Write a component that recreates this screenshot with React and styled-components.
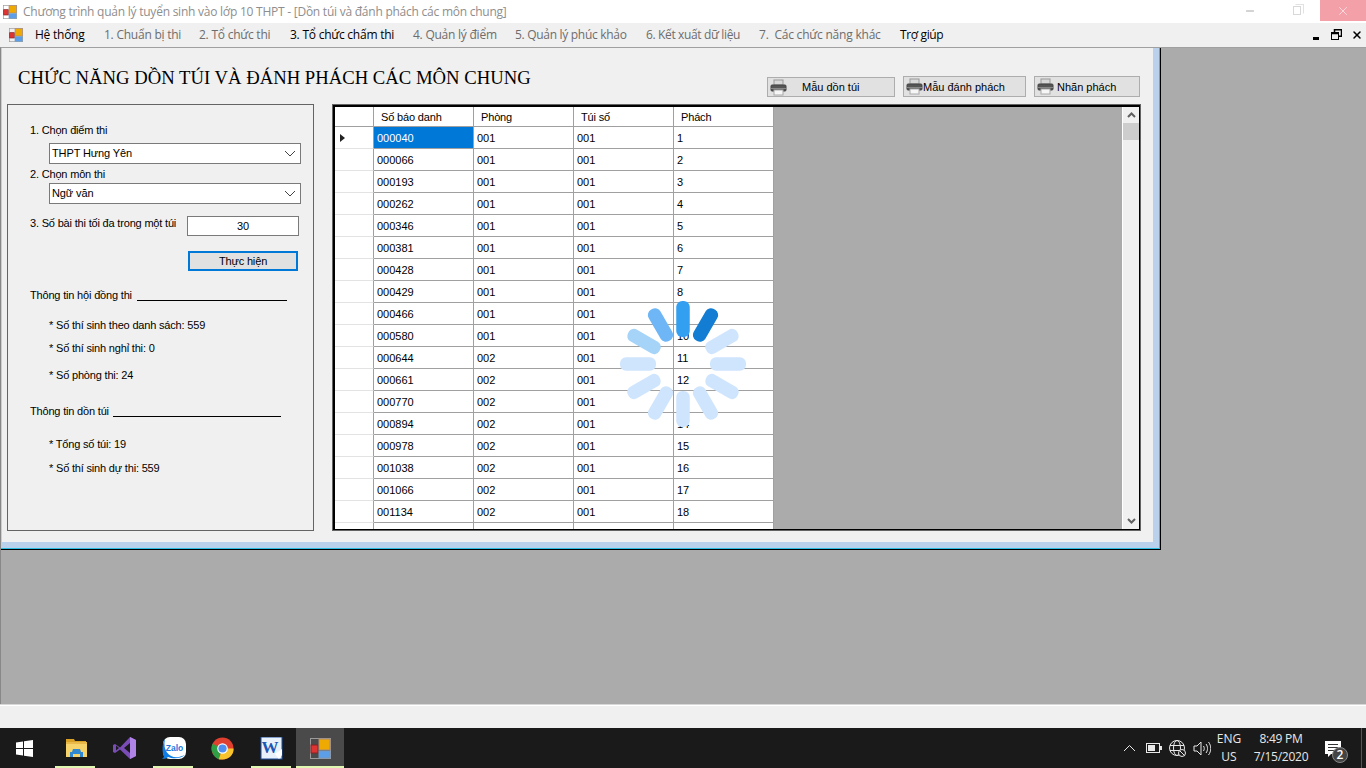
import React from 'react';
import styled, { createGlobalStyle } from 'styled-components';
import { Minus, X } from 'lucide-react';

const Global = createGlobalStyle`
  html, body { margin: 0; padding: 0; width: 1366px; height: 768px; overflow: hidden; background: #ababab; }
  * { box-sizing: border-box; }
  body { font-family: "Liberation Sans", Arial, sans-serif; font-size: 11px; color: #000; }
`;

const Screen = styled.div`display: flex; flex-direction: column; width: 1366px; height: 768px;`;

const TitleBar = styled.div`
  height: 23px; background: #fff; display: flex; align-items: center; flex: none;
`;
const TitleText = styled.span`
  font-family: "Open Sans", sans-serif; font-size: 12px; color: #8e8e8e; margin-left: 6px; white-space: nowrap; letter-spacing: -0.02em;
  flex: 1;
`;
const LogoSlot = styled.span`display: flex; margin-left: ${p => p.$left}px;`;
const WinButton = styled.div`
  width: ${p => p.$close ? 46 : 47}px; height: 21px; align-self: flex-start; display: flex; align-items: center; justify-content: center;
  background: ${p => p.$close ? '#f4a0a8' : 'transparent'}; color: ${p => p.$close ? '#fff' : '#a8a8a8'};
`;
const RestoreGlyph = styled.span`
  width: 8px; height: 9px; border: 1px solid #d8d8d8; position: relative; display: block;
  &::after { content: ''; position: absolute; width: 7px; height: 8px; left: 1px; top: -3px; border: 1px solid #e2e2e2; border-left-color: transparent; border-bottom-color: transparent; }
`;

const MenuBar = styled.div`
  height: 24px; flex: none; display: flex; align-items: center; background: #f0f0f0; padding-bottom: 1px;
`;
const MenuItem = styled.span`
  position: absolute; left: ${p => p.$x}px;
  font-family: "Open Sans", sans-serif; font-size: 12px; white-space: nowrap; letter-spacing: ${p => p.$ls}em;
  color: ${p => p.$on ? '#000' : '#6d6d6d'};
`;
const MenuTrack = styled.div`position: relative; flex: 1; height: 100%; display: flex; align-items: center;`;
const MdiControls = styled.div`display: flex; gap: 9px; align-items: center; margin-right: 3px; color: #000;`;
const MdiMin = styled.span`width: 6px; height: 3px; background: #000; margin: 7px 3px 0 0;`;

const Desktop = styled.div`flex: 1; background: #ababab; min-height: 0; border-left: 1px solid #888; border-top: 1px solid #a0a0a0;`;

const ChildWindow = styled.div`
  width: 1160px; height: 502px; background: #b9d1ea; border-right: 1px solid #000; border-bottom: 1px solid #000;
  box-shadow: inset -1px -1px 0 #2ebde0; padding: 0 7px 7px 1px;
`;
const ChildBody = styled.div`
  background: #f0f0f0; height: 100%; position: relative; padding: 0 0 0 5px; display: flex; flex-direction: column;
`;
const HeadRow = styled.div`display: flex; height: 56px; flex: none; align-items: flex-start;`;
const Heading = styled.h1`
  margin: 19px 0 0 11px; font-family: "Liberation Serif", serif; font-weight: 400; font-size: 18.7px; line-height: 22px; white-space: nowrap; flex: 1;
`;
const Tools = styled.div`display: flex; align-items: flex-end; margin-top: 28px; margin-right: 13px;`;
const ToolButton = styled.div`
  width: ${p => p.$w}px; height: ${p => p.$h}px; margin-left: ${p => p.$gap}px; background: #e1e1e1; border: 1px solid #adadad;
  display: flex; align-items: center; padding-left: 2px; white-space: nowrap;
`;
const ToolLabel = styled.span`margin-left: ${p => p.$m}px;`;

const Columns = styled.div`display: flex; align-items: flex-start;`;
const Panel = styled.div`
  width: 307px; height: 427px; border: 1px solid #646464; padding: 18px 0 0 22px; flex: none;
`;
const Label = styled.div`
  height: 15px; line-height: 15px; margin-left: ${p => p.$l || 0}px; margin-top: ${p => p.$t || 0}px; white-space: nowrap; letter-spacing: -0.18px;
  width: ${p => p.$w ? `${p.$w}px` : 'auto'}; flex: none;
`;
const Combo = styled.div`
  width: 252px; height: 21px; margin: ${p => p.$t}px 0 0 19px; background: #fff; border: 1px solid #7a7a7a; display: flex; align-items: center; justify-content: space-between; padding: 0 4px 1px 2px; letter-spacing: -0.12px;
`;
const Line3 = styled.div`display: flex; margin-top: 12px; align-items: flex-start; height: 20px;`;
const Spin = styled.div`
  width: 112px; height: 20px; background: #fff; border: 1px solid #7a7a7a; text-align: center; line-height: 19px;
`;
const Go = styled.div`
  width: 110px; height: 20px; margin: 15px 0 0 158px; background: #e1e1e1; border: 2px solid #0078d7; text-align: center; line-height: 16px; letter-spacing: -0.15px;
`;
const HeadLine = styled.div`
  display: flex; align-items: flex-end; height: 15px; margin-top: ${p => p.$t}px; white-space: nowrap;
`;
const Rule = styled.span`height: 1px; background: #000; width: ${p => p.$w}px; margin-bottom: 2px;`;

const GridFrame = styled.div`
  width: 809px; height: 427px; margin-left: 18px; border: 1px solid #646464; flex: none;
`;
const GridInner = styled.div`
  height: 100%; border-style: solid; border-color: #000; border-width: 2px 1px 1px 2px; background: #ababab; display: flex; overflow: hidden;
`;
const GridArea = styled.div`flex: 1; min-width: 0; overflow: hidden;`;
const Row = styled.div`display: flex; height: ${p => p.$head ? 20 : 22}px;`;
const Corner = styled.div`
  width: 39px; flex: none; background: #fff; border-right: 1px solid #a0a0a0; border-bottom: 1px solid ${p => p.$line ? '#e3e3e3' : '#a0a0a0'}; display: flex; align-items: center; padding-left: 5px;
`;
const HeadCell = styled.div`
  width: 100px; flex: none; background: #fff; border-right: 1px solid #a0a0a0; border-bottom: 1px solid #a0a0a0; padding-left: 7px; line-height: 21px; letter-spacing: -0.15px;
`;
const Cell = styled.div`
  width: 100px; flex: none; padding-left: 3px; line-height: 23px;
  background: ${p => p.$sel ? '#0078d7' : '#fff'}; color: ${p => p.$sel ? '#fff' : '#000'};
  border-right: 1px solid #a0a0a0; border-bottom: 1px solid #a0a0a0;
`;
const Arrow = styled.span`width: 0; height: 0; border-left: 5px solid #222; border-top: 4.5px solid transparent; border-bottom: 4.5px solid transparent;`;
const Scroll = styled.div`
  width: 17px; flex: none; background: #f0f0f0; border-left: 1px solid #fff; display: flex; flex-direction: column; align-items: center;
`;
const ScrollBtn = styled.div`height: 16px; width: 100%; display: flex; align-items: center; justify-content: center;`;
const Thumb = styled.div`width: 100%; height: 17px; background: #cdcdcd;`;
const ScrollFill = styled.div`flex: 1;`;

const Loader = styled.svg`position: absolute; left: 614px; top: 249px;`;

const Status = styled.div`height: 24px; flex: none; background: #f0f0f0; border-top: 1px solid #d7d7d7; box-shadow: inset 0 1px 0 #fff;`;
const Taskbar = styled.div`height: 40px; flex: none; background: #1a1a1a; display: flex; align-items: stretch; color: #e8e8e8;`;
const StartBtn = styled.div`width: 48px; display: flex; align-items: center; justify-content: center; margin-right: 3px; flex: none;`;
const TaskBtn = styled.div`
  width: ${p => p.$active ? 48 : 49}px; display: flex; align-items: center; justify-content: center; position: relative; flex: none;
  background: ${p => p.$active ? '#4a4a4a' : 'transparent'};
  &::after { content: ''; position: absolute; bottom: 0; height: 2px; background: #dff7b0; left: ${p => p.$active ? 0 : 4}px; right: ${p => p.$active ? 0 : 5}px; display: ${p => p.$open ? 'block' : 'none'}; }
`;
const Spacer = styled.div`flex: 1;`;
const Tray = styled.div`display: flex; align-items: center; font-family: "Open Sans", sans-serif; font-size: 12px; border-right: 1px solid #555; margin-right: 4px;`;
const TrayIcon = styled.span`display: flex; margin-left: ${p => p.$m}px; padding-top: ${p => p.$pt || 0}px;`;
const Lang = styled.div`width: 30px; margin-left: 3px; text-align: center; line-height: 18px;`;
const Clock = styled.div`width: 66px; margin-left: 4px; text-align: center; line-height: 18px; letter-spacing: -0.02em;`;
const Note = styled.div`width: 30px; height: 30px; margin: 0 10px 0 7px; position: relative;`;
const Badge = styled.span`
  position: absolute; right: 3px; bottom: 0; width: 16px; height: 16px; border-radius: 50%; background: #444; border: 1px solid #888; color: #fff; font-size: 12px; font-weight: 600; line-height: 14px; text-align: center;
`;

const Logo = ({ s = 14 }) => (
  <svg width={s} height={s} viewBox="0 0 21 21">
    <rect x="0.5" y="0.5" width="20" height="20" fill="none" stroke="#9a9a9a" />
    <rect x="1" y="7" width="7" height="8" fill="#d33" stroke="#822" />
    <rect x="9" y="1" width="11" height="11" fill="#eeaa00" stroke="#a87" />
    <rect x="9" y="13" width="11" height="7" fill="#5c9ee8" stroke="#79b" />
  </svg>
);

const Printer = () => (
  <svg width="17" height="17" viewBox="0 0 17 17">
    <rect x="4" y="1" width="9" height="5" fill="#d8d8d8" stroke="#999" />
    <rect x="1" y="6" width="15" height="6" rx="1" fill="#555" stroke="#444" />
    <rect x="1" y="9" width="15" height="1" fill="#888" />
    <rect x="4" y="11" width="9" height="5" fill="#f6f6f6" stroke="#aaa" />
  </svg>
);

const Chevron = () => (
  <svg width="12" height="7" viewBox="0 0 12 7"><path d="M1 1l5 5 5-5" fill="none" stroke="#444" strokeWidth="1" /></svg>
);

const ScrollChev = ({ up }) => (
  <svg width="9" height="6" viewBox="0 0 9 6">
    <path d={up ? 'M1 5l3.5-3.5L8 5' : 'M1 1l3.5 3.5L8 1'} fill="none" stroke="#606060" strokeWidth="2" />
  </svg>
);

const WinLogo = () => (
  <svg width="17" height="17" viewBox="0 0 17 17" fill="#fff">
    <path d="M0 2.4l7-1v6.6H0zM8 1.2L17 0v8H8zM0 9h7v6.6l-7-1zM8 9h9v8l-9-1.2z" />
  </svg>
);
const Folder = () => (
  <svg width="24" height="24" viewBox="0 0 24 24">
    <path d="M2 3h8l1 2h11v2H2z" fill="#d9a227" />
    <rect x="2" y="6" width="21" height="15" fill="#f6d36b" />
    <rect x="2" y="6" width="21" height="2" fill="#e9b949" />
    <path d="M6 21v-5h2l1-3h7l1 3h2v5h-3v-3H9v3z" fill="#2f88d0" />
  </svg>
);
const VS = () => (
  <svg width="24" height="24" viewBox="0 0 24 24">
    <path d="M17 1l6 3v16l-6 3-10-9.500-5 3.500-2-1V9l2-1 5 3.500z" fill="#7a4cb5" />
    <path d="M17 1l6 3v16l-6 3z" fill="#b083e6" />
    <path d="M3 9.500v5l3-2.500zM17 7l-6 5 6 5z" fill="#1a1a1a" />
  </svg>
);
const Zalo = () => (
  <svg width="24" height="24" viewBox="0 0 24 24">
    <rect x="1" y="1" width="23" height="22" rx="7" fill="#fff" />
    <path d="M3 3C0 7 0 16 2 21l-2 2c3 0 5-1 6-2 5 2 12 2 17-2l-6 2C9 23 0 16 3 3z" fill="#0d7ee8" />
    <text x="12.500" y="15" fontFamily="'Liberation Sans', sans-serif" fontSize="8.500" fontWeight="700" fill="#1a78e0" textAnchor="middle">Zalo</text>
  </svg>
);
const Chrome = () => (
  <svg width="23" height="23" viewBox="0 0 24 24">
    <circle cx="12" cy="12" r="11.500" fill="#e0402f" />
    <path d="M12 12L1.600 7C-1 13 2 21 8 23z" fill="#2f9e44" />
    <path d="M12 12h11.500C24 18 19 23.500 12 23.500H8z" fill="#f7c52b" />
    <circle cx="12" cy="12" r="5.500" fill="#fff" />
    <circle cx="12" cy="12" r="4.300" fill="#4f8fef" />
  </svg>
);
const Word = () => (
  <svg width="23" height="23" viewBox="0 0 23 23">
    <rect x="1" y="0" width="21" height="22" fill="#e9f1fb" stroke="#1d4e9e" />
    <text x="10" y="16" fontFamily="'Liberation Serif', serif" fontSize="17" fontWeight="700" fill="#1b57b5" textAnchor="middle">W</text>
    <path d="M15 17l7-5v6l-3 4z" fill="#fff" />
  </svg>
);

const Globe = () => (
  <svg width="17" height="17" viewBox="0 0 17 17" fill="none" stroke="#e8e8e8" strokeWidth="1">
    <circle cx="8" cy="8" r="7.500" />
    <ellipse cx="8" cy="8" rx="3.500" ry="7.500" />
    <path d="M1 5.500h14M1 10.500h14" />
    <circle cx="13" cy="13" r="3.500" fill="#1a1a1a" />
    <path d="M10.500 10.500l5 5" />
  </svg>
);
const Speaker = () => (
  <svg width="18" height="15" viewBox="0 0 18 15" fill="none" stroke="#e8e8e8" strokeWidth="1">
    <path d="M1 5h3l4-4v13l-4-4H1z" />
    <path d="M10.500 5c1 1.500 1 3.500 0 5M13 3c2 2.500 2 6.500 0 9M15.500 1c3 4 3 9 0 13" />
  </svg>
);
const Battery = () => (
  <svg width="16" height="10" viewBox="0 0 16 10">
    <rect x="0.500" y="0.500" width="13" height="9" fill="none" stroke="#e8e8e8" />
    <rect x="2" y="2" width="7" height="6" fill="#e8e8e8" />
    <rect x="14" y="3" width="2" height="4" fill="#e8e8e8" />
  </svg>
);
const Caret = () => (
  <svg width="13" height="8" viewBox="0 0 13 8"><path d="M1 7l5.500-5.500L12 7" fill="none" stroke="#e8e8e8" strokeWidth="1" /></svg>
);
const Bubble = () => (
  <svg width="17" height="17" viewBox="0 0 17 17">
    <path d="M0 0h16v13H6l-3 3v-3H0z" fill="#fff" />
    <path d="M3 3.500h10M3 6.500h10M3 9.500h10" stroke="#333" />
  </svg>
);

const Spinner = () => {
  const colors = { 0: '#329ff1', 30: '#127dd2', 330: '#6eb6f6', 300: '#a5d4f8' };
  return (
    <Loader width="134" height="134" viewBox="-67 -67 134 134">
      {[30, 60, 90, 120, 150, 180, 210, 240, 270, 300, 330, 0].map(a => (
        <rect key={a} x="-6.750" y="-63" width="13.500" height="36" rx="6" fill={colors[a] || '#cfe5fd'} transform={`rotate(${a})`} />
      ))}
    </Loader>
  );
};

const data = [
  ['000040','001','1'],['000066','001','2'],['000193','001','3'],['000262','001','4'],['000346','001','5'],['000381','001','6'],
  ['000428','001','7'],['000429','001','8'],['000466','001','9'],['000580','001','10'],['000644','002','11'],['000661','002','12'],
  ['000770','002','13'],['000894','002','14'],['000978','002','15'],['001038','002','16'],['001066','002','17'],['001134','002','18'],['001200','002','19'],
];
const menus = [
  ['Hệ thống', 35, true, -0.02], ['1. Chuẩn bị thi', 104, false, -0.02], ['2. Tổ chức thi', 199, false, -0.02], ['3. Tổ chức chấm thi', 290, true, -0.02], ['4. Quản lý điểm', 413, false, -0.02],
  ['5. Quản lý phúc khảo', 515, false, -0.025], ['6. Kết xuất dữ liệu', 646, false, -0.03], ['7.\u00a0\u00a0Các chức năng khác', 759, false, -0.018], ['Trợ giúp', 900, true, -0.03],
];

export default function App() {
  return (
    <Screen>
      <Global />
      <TitleBar>
        <LogoSlot $left={3}><Logo /></LogoSlot>
        <TitleText>Chương trình quản lý tuyển sinh vào lớp 10 THPT - [Dồn túi và đánh phách các môn chung]</TitleText>
        <WinButton><Minus size={12} /></WinButton>
        <WinButton><RestoreGlyph /></WinButton>
        <WinButton $close><X size={14} strokeWidth={1} /></WinButton>
      </TitleBar>
      <MenuBar>
        <MenuTrack>
          <LogoSlot $left={9}><Logo /></LogoSlot>
          {menus.map(([t, x, on, ls]) => <MenuItem key={t} $x={x} $on={on} $ls={ls}>{t}</MenuItem>)}
        </MenuTrack>
        <MdiControls>
          <MdiMin />
          <svg width="11" height="11" viewBox="0 0 11 11" fill="none" stroke="#000"><rect x="0.500" y="3.500" width="7" height="7" strokeWidth="1" /><path d="M0.500 4.500h7M3.500 3V0.800h7v6.500H8" strokeWidth="1.500" /></svg>
          <X size={12} strokeWidth={3} />
        </MdiControls>
      </MenuBar>
      <Desktop>
        <ChildWindow>
          <ChildBody>
            <HeadRow>
              <Heading>CHỨC NĂNG DỒN TÚI VÀ ĐÁNH PHÁCH CÁC MÔN CHUNG</Heading>
              <Tools>
                <ToolButton $w={128} $h={20} $gap={0}><Printer /><ToolLabel $m={15}>Mẫu dồn túi</ToolLabel></ToolButton>
                <ToolButton $w={123} $h={21} $gap={8}><Printer /><ToolLabel $m={0}>Mẫu đánh phách</ToolLabel></ToolButton>
                <ToolButton $w={106} $h={21} $gap={8}><Printer /><ToolLabel $m={3}>Nhãn phách</ToolLabel></ToolButton>
              </Tools>
            </HeadRow>
            <Columns>
              <Panel>
                <Label>1. Chọn điểm thi</Label>
                <Combo $t={5}>THPT Hưng Yên<Chevron /></Combo>
                <Label $t={3}>2. Chọn môn thi</Label>
                <Combo $t={1}>Ngữ văn<Chevron /></Combo>
                <Line3>
                  <Label $w={157}>3. Số bài thi tối đa trong một túi</Label>
                  <Spin>30</Spin>
                </Line3>
                <Go>Thực hiện</Go>
                <HeadLine $t={17}><Label $w={107}>Thông tin hội đồng thi</Label><Rule $w={150} /></HeadLine>
                <Label $l={19} $t={15}>* Số thí sinh theo danh sách: 559</Label>
                <Label $l={19} $t={8}>* Số thí sinh nghỉ thi: 0</Label>
                <Label $l={19} $t={12}>* Số phòng thi: 24</Label>
                <HeadLine $t={21}><Label $w={83}>Thông tin dồn túi</Label><Rule $w={168} /></HeadLine>
                <Label $l={19} $t={18}>* Tổng số túi: 19</Label>
                <Label $l={19} $t={9}>* Số thí sinh dự thi: 559</Label>
              </Panel>
              <GridFrame>
                <GridInner>
                  <GridArea>
                    <Row $head>
                      <Corner />
                      <HeadCell>Số báo danh</HeadCell><HeadCell>Phòng</HeadCell><HeadCell>Túi số</HeadCell><HeadCell>Phách</HeadCell>
                    </Row>
                    {data.map((r, i) => (
                      <Row key={r[0]}>
                        <Corner $line>{i === 0 && <Arrow />}</Corner>
                        <Cell $sel={i === 0}>{r[0]}</Cell><Cell>{r[1]}</Cell><Cell>001</Cell><Cell>{r[2]}</Cell>
                      </Row>
                    ))}
                  </GridArea>
                  <Scroll>
                    <ScrollBtn><ScrollChev up /></ScrollBtn>
                    <Thumb />
                    <ScrollFill />
                    <ScrollBtn><ScrollChev /></ScrollBtn>
                  </Scroll>
                </GridInner>
              </GridFrame>
            </Columns>
            <Spinner />
          </ChildBody>
        </ChildWindow>
      </Desktop>
      <Status />
      <Taskbar>
        <StartBtn><WinLogo /></StartBtn>
        <TaskBtn $open><Folder /></TaskBtn>
        <TaskBtn><VS /></TaskBtn>
        <TaskBtn $open><Zalo /></TaskBtn>
        <TaskBtn><Chrome /></TaskBtn>
        <TaskBtn $open><Word /></TaskBtn>
        <TaskBtn $active $open><Logo s={21} /></TaskBtn>
        <Spacer />
        <Tray>
          <TrayIcon $m={0}><Caret /></TrayIcon>
          <TrayIcon $m={10}><Battery /></TrayIcon>
          <TrayIcon $m={7}><Globe /></TrayIcon>
          <TrayIcon $m={7}><Speaker /></TrayIcon>
          <Lang>ENG<br />US</Lang>
          <Clock>8:49 PM<br />7/15/2020</Clock>
          <Note>
            <TrayIcon $m={4} $pt={8}><Bubble /></TrayIcon>
            <Badge>2</Badge>
          </Note>
        </Tray>
      </Taskbar>
    </Screen>
  );
}
